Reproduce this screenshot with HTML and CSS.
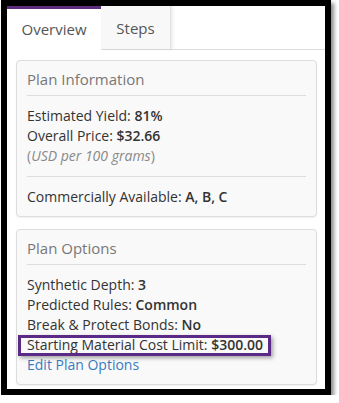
FILE: index.html
```html
<!DOCTYPE html>
<html lang="en">
  <head>
    <meta charset="UTF-8" />
    <meta name="viewport" content="width=device-width, initial-scale=1.0" />
    <title>Plan Overview</title>
    <link rel="stylesheet" href="styles.css">
  </head>
  <body>
    <div class="frame">
      <ul class="tabs">
        <li class="tab active">Overview</li>
        <li class="tab">Steps</li>
      </ul>
      <div class="tab-content">
        <div class="panel">
          <div class="panel-heading">Plan Information</div>
          <div class="panel-body">
            <div class="line">Estimated Yield: <b>81%</b></div>
            <div class="line">Overall Price: <b>$32.66</b></div>
            <div class="line note">(<i>USD per 100 grams</i>)</div>
          </div>
          <div class="panel-body">
            <div class="line">Commercially Available: <b>A, B, C</b></div>
          </div>
        </div>
        <div class="panel">
          <div class="panel-heading">Plan Options</div>
          <div class="panel-body">
            <div class="line">Synthetic Depth: <b>3</b></div>
            <div class="line">Predicted Rules: <b>Common</b></div>
            <div class="line">Break &amp; Protect Bonds: <b>No</b></div>
            <div class="line">
              <span class="highlight">Starting Material Cost Limit: <b>$300.00</b></span>
            </div>
            <div class="line"><a href="#">Edit Plan Options</a></div>
          </div>
        </div>
      </div>
    </div>
  </body>
</html>
```

FILE: styles.css
```css
* {
  box-sizing: border-box;
}
body {
  margin: 0;
  background: #fff;
  font-family: "Open Sans", "Noto Sans", sans-serif;
  font-size: 14px;
  color: #333;
}
.frame {
  margin-left: 1px;
  width: 330px;
  height: 395px;
  border: 6px solid #000;
  background: #fff;
  box-shadow: 3px 3px 4px rgba(0, 0, 0, 0.45);
}
/* tab strip across the top */
.tabs {
  display: flex;
  margin: 0;
  padding: 0;
  list-style: none;
  height: 44px;
  border-bottom: 1px solid #ddd;
}
.tab {
  display: flex;
  align-items: center;
  justify-content: center;
  font-size: 15px;
  color: #555;
  height: 44px;
}
.tab.active {
  width: 94px;
  border-top: 3px solid #5e2d80;
  background: #fff;
  height: 44px;
  padding-bottom: 1px;
}
.tab:not(.active) {
  width: 70px;
  background: #f8f8f8;
  border-right: 1px solid #e2e2e2;
  box-shadow: 2px 0 3px rgba(0, 0, 0, 0.08);
  height: 43px;
}
.tab-content {
  padding: 10px 8px 0 9px;
}
.panel {
  background: #f9f9f9;
  border: 1px solid #ddd;
  border-radius: 4px;
  padding: 0 10px 9px;
  margin-bottom: 12px;
  box-shadow: 0 1px 2px rgba(0, 0, 0, 0.06);
}
.panel-heading {
  height: 35px;
  line-height: 35px;
  padding-top: 1px;
  font-size: 15px;
  color: #777;
  border-bottom: 1px solid #ddd;
}
.panel-body {
  padding-top: 10px;
}
.panel-body + .panel-body {
  border-top: 1px solid #ddd;
  margin-top: 10px;
}
.line {
  line-height: 20px;
  white-space: nowrap;
}
.line b {
  font-weight: 600;
}
.note {
  color: #888;
}
a {
  color: #3a7bbf;
  text-decoration: none;
}
.highlight {
  position: relative;
  display: inline-block;
}
.highlight::after {
  content: "";
  position: absolute;
  left: -9px;
  right: -8px;
  top: 0;
  bottom: -1px;
  border: 3px solid #5b2a86;
  box-shadow: 2px 2px 4px rgba(0, 0, 0, 0.35);
}
```
